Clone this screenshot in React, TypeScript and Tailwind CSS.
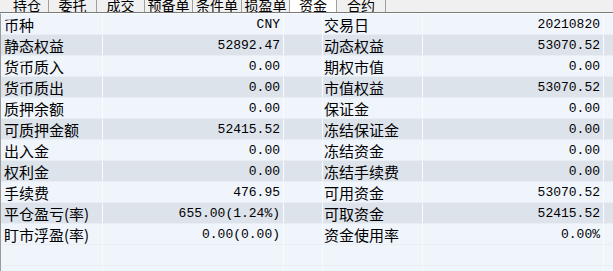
import React from "react";

const tabs: { name: string; w: string; active?: boolean }[] = [
  { name: "持仓", w: "w-[49px] pl-[6px]" },
  { name: "委托", w: "w-[48px]" },
  { name: "成交", w: "w-[48px]" },
  { name: "预备单", w: "w-[48px]" },
  { name: "条件单", w: "w-[49px]" },
  { name: "损盈单", w: "w-[48px]" },
  { name: "资金", w: "w-[47px]", active: true },
  { name: "合约", w: "w-[49px]" },
];

const rows: [string, string, string, string][] = [
  ["币种", "CNY", "交易日", "20210820"],
  ["静态权益", "52892.47", "动态权益", "53070.52"],
  ["货币质入", "0.00", "期权市值", "0.00"],
  ["货币质出", "0.00", "市值权益", "53070.52"],
  ["质押余额", "0.00", "保证金", "0.00"],
  ["可质押金额", "52415.52", "冻结保证金", "0.00"],
  ["出入金", "0.00", "冻结资金", "0.00"],
  ["权利金", "0.00", "冻结手续费", "0.00"],
  ["手续费", "476.95", "可用资金", "53070.52"],
  ["平仓盈亏(率)", "655.00(1.24%)", "可取资金", "52415.52"],
  ["盯市浮盈(率)", "0.00(0.00)", "资金使用率", "0.00%"],
];

const cjk = { fontFamily: '"Noto Sans CJK SC", "Noto Sans", sans-serif' };
const mono = { fontFamily: '"Liberation Mono", "Noto Sans CJK SC", monospace' };

function Row({ r, i }: { r?: [string, string, string, string]; i: number }) {
  const bg = r && i % 2 === 1 ? "bg-[#dde3eb]" : "bg-[#f0f5fc]";
  const cell = "h-full flex items-center border-r border-[#f9fbfe] shrink-0";
  return (
    <div className={`flex h-[21px] shrink-0 border-b border-[#e9eef5] ${bg}`}>
      <div className={`${cell} w-[102px] pl-[3px] text-[15px] leading-none text-black`} style={cjk}>
        {r ? r[0] : ""}
      </div>
      <div className={`${cell} w-[181px] justify-end pr-[3px] text-[13px] leading-none text-black`} style={mono}>
        {r ? r[1] : ""}
      </div>
      <div className={`${cell} w-[39px]`} />
      <div className={`${cell} w-[100px] pl-[1px] text-[15px] leading-none text-black`} style={cjk}>
        {r ? r[2] : ""}
      </div>
      <div className={`${cell} w-[181px] justify-end pr-[3px] text-[13px] leading-none text-black`} style={mono}>
        {r ? r[3] : ""}
      </div>
      <div className="h-full flex-1" />
    </div>
  );
}

export default function App() {
  return (
    <div className="w-[613px] h-[271px] overflow-hidden flex flex-col bg-[#f0f5fc]">
      <div className="flex h-[13px] shrink-0 bg-[#f0f0f0] border-b border-[#7a7a7a]">
        {tabs.map((t) => (
          <div
            key={t.name}
            className={`${t.w} h-full flex items-center justify-center overflow-hidden border-r border-[#a0a0a0] ${
              t.active ? "bg-white" : ""
            }`}
          >
            <span className="text-[14px] leading-none text-black -mt-[2px]" style={cjk}>
              {t.name}
            </span>
          </div>
        ))}
        <div className="flex-1" />
      </div>
      <div className="flex-1 flex flex-col border-l border-[#9a9a9a] border-t border-t-[#fafcff] overflow-hidden">
        {rows.map((r, i) => (
          <Row key={i} r={r} i={i} />
        ))}
        <Row i={11} />
        <Row i={12} />
      </div>
    </div>
  );
}
